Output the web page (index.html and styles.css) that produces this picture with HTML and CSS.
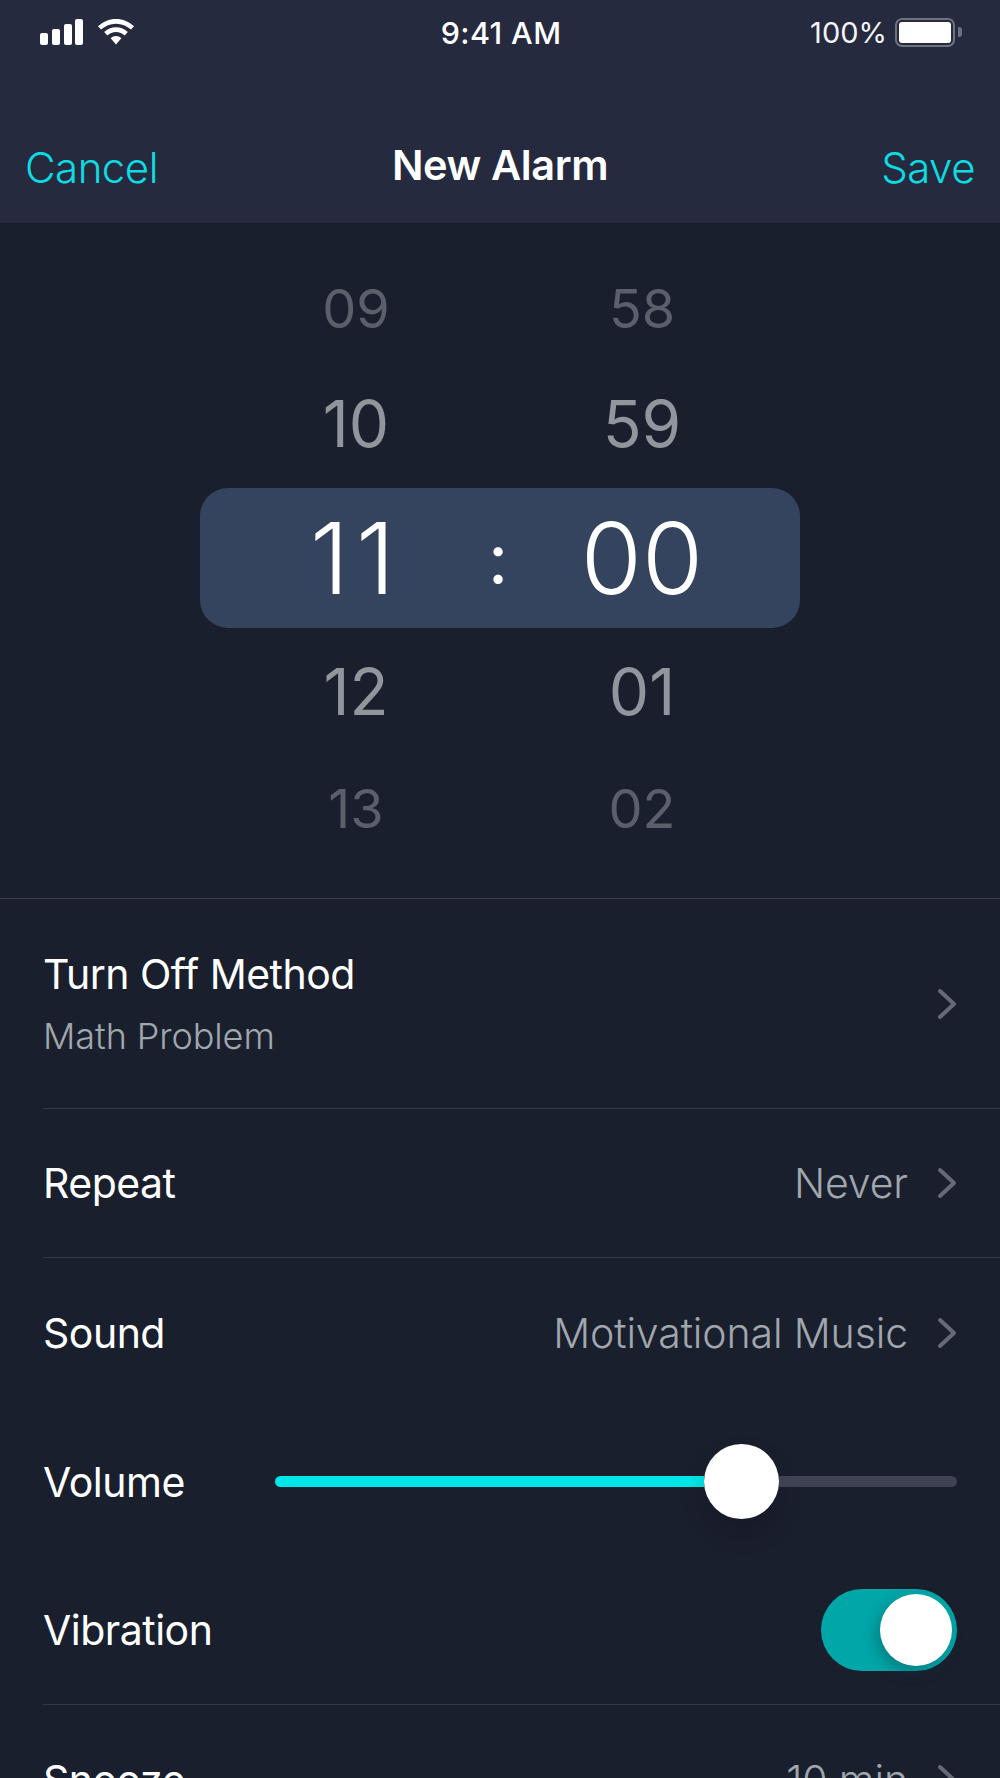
FILE: index.html
```html
<!DOCTYPE html>
<html lang="en">
<head>
<meta charset="utf-8">
<title>New Alarm</title>
<link rel="stylesheet" href="styles.css">
</head>
<body>
<div class="screen">
  <header class="top">
    <div class="status">
      <div class="status-left">
        <svg class="signal" viewBox="0 0 43 26" width="43" height="26"><rect x="0" y="14" width="8" height="12" rx="2"/><rect x="12" y="10" width="8" height="16" rx="2"/><rect x="24" y="5" width="8" height="21" rx="2"/><rect x="35" y="0" width="8" height="26" rx="2"/></svg>
        <svg class="wifi" viewBox="0 0 36 26" width="36" height="26"><path d="M18 0C11 0 5 2.700 0 7.300L3 10.600C7 7 12.300 4.800 18 4.800S29 7 33 10.600L36 7.300C31 2.700 25 0 18 0Z"/><path d="M18 8.300C13.400 8.300 9.300 10 6.200 13L9.400 16.400C11.700 14.300 14.700 13 18 13S24.300 14.300 26.600 16.400L29.800 13C26.700 10 22.600 8.300 18 8.300Z"/><path d="M18 17C16 17 14.100 17.800 12.700 19.200L18 25.500L23.300 19.200C21.900 17.800 20 17 18 17Z"/></svg>
      </div>
      <div class="clock">9:41 AM</div>
      <div class="status-right">
        <span class="pct">100%</span>
        <span class="battery"><span class="battery-fill"></span></span>
        <span class="battery-nub"></span>
      </div>
    </div>
    <nav class="nav">
      <span class="nav-btn">Cancel</span>
      <span class="nav-title">New Alarm</span>
      <span class="nav-btn nav-end">Save</span>
    </nav>
  </header>

  <section class="picker">
    <div class="pick-row far"><span class="pick-h">09</span><span></span><span class="pick-m">58</span></div>
    <div class="pick-row near"><span class="pick-h">10</span><span></span><span class="pick-m">59</span></div>
    <div class="pick-row selected"><span class="pick-h">11</span><span class="pick-c">:</span><span class="pick-m">00</span></div>
    <div class="pick-row near"><span class="pick-h">12</span><span></span><span class="pick-m">01</span></div>
    <div class="pick-row far"><span class="pick-h">13</span><span></span><span class="pick-m">02</span></div>
  </section>

  <section class="settings">
    <div class="row row-tall">
      <div class="row-text">
        <div class="label">Turn Off Method</div>
        <div class="sub">Math Problem</div>
      </div>
      <svg class="chev" viewBox="0 0 20 32" width="20" height="32"><path d="M3 3L17 16L3 29"/></svg>
    </div>
    <div class="row">
      <div class="label">Repeat</div>
      <div class="value">Never</div>
      <svg class="chev" viewBox="0 0 20 32" width="20" height="32"><path d="M3 3L17 16L3 29"/></svg>
    </div>
    <div class="row no-line">
      <div class="label">Sound</div>
      <div class="value">Motivational Music</div>
      <svg class="chev" viewBox="0 0 20 32" width="20" height="32"><path d="M3 3L17 16L3 29"/></svg>
    </div>
    <div class="row no-line">
      <div class="label label-vol">Volume</div>
      <div class="slider">
        <div class="slider-fill"></div>
        <div class="slider-knob"></div>
        <div class="slider-rest"></div>
      </div>
    </div>
    <div class="row row-vib">
      <div class="label">Vibration</div>
      <div class="toggle"><span class="toggle-knob"></span></div>
    </div>
    <div class="row no-line">
      <div class="label">Snooze</div>
      <div class="value">10 min</div>
      <svg class="chev" viewBox="0 0 20 32" width="20" height="32"><path d="M3 3L17 16L3 29"/></svg>
    </div>
  </section>
</div>
</body>
</html>
```

FILE: styles.css
```css
* { box-sizing: border-box; }
html, body { margin: 0; padding: 0; background: #1a1f2e; }
body { height: 1778px; overflow: hidden; font-family: Inter, "Liberation Sans", sans-serif; color: #fff; }
.screen { width: 1000px; height: 1778px; overflow: hidden; }

.top { height: 224px; background: #252a3f; border-bottom: 1px solid #171b29; }
.status { height: 64px; display: flex; align-items: center; justify-content: space-between; padding: 0 38px 0 40px; }
.status-left { display: flex; align-items: flex-end; gap: 15px; width: 200px; }
.signal, .wifi { fill: #fff; display: block; }
.clock { font-size: 30.500px; font-weight: 500; letter-spacing: 0.4px; }
.status-right { width: 200px; display: flex; align-items: center; justify-content: flex-end; }
.pct { font-size: 29px; font-weight: 400; margin-right: 8px; color: #f4f4f6; white-space: nowrap; }
.battery { width: 60px; height: 29px; border: 2.500px solid #6e7180; border-radius: 7px; padding: 2px; display: block; flex: none; }
.battery-fill { display: block; height: 100%; background: #fff; border-radius: 3px; }
.battery-nub { width: 4px; height: 10px; background: #6e7180; border-radius: 0 3px 3px 0; margin-left: 3px; flex: none; }

.nav { display: grid; grid-template-columns: 1fr auto 1fr; align-items: center; padding: 0 25px; height: 64px; margin-top: 71px; }
.nav-btn { font-size: 42px; color: #0ddce2; font-weight: 300; letter-spacing: -0.5px; }
.nav-end { text-align: right; }
.nav-title { font-size: 41.500px; font-weight: 600; letter-spacing: -0.4px; margin-top: -5px; }

.picker { height: 675px; padding-top: 26px; border-bottom: 1px solid #3a3e4c; }
.pick-row { display: grid; grid-template-columns: 200px 84px 204px; height: 116px; align-items: center; text-align: center; padding-left: 256px; font-weight: 400; }
.far { font-size: 54px; color: #5a5f6a; }
.near { font-size: 64px; color: #91959c; line-height: 112px; }
.selected { height: 140px; margin: 6px 200px; padding-left: 56px; background: #34445e; border-radius: 28px; font-size: 99px; font-weight: 300; color: #fff; }
.selected .pick-h { letter-spacing: 7px; }
.pick-c { font-size: 70px; font-weight: 400; }

.settings { padding-left: 43px; }
.row { height: 149px; display: flex; align-items: center; padding-right: 43px; border-bottom: 1px solid #33374a; }
.row.no-line { border-bottom: 0; }
.row-tall { height: 210px; }
.row-text { flex: 1; }
.label { font-size: 41px; font-weight: 400; color: #fff; letter-spacing: -0.5px; flex: 1; }
.sub { font-size: 36px; font-weight: 300; color: #a0a7ad; letter-spacing: -0.1px; margin-top: 15px; }
.value { font-size: 41px; font-weight: 300; color: #a0a7ad; letter-spacing: -0.1px; margin-right: 29px; }
.chev { fill: none; stroke: #666a75; stroke-width: 4; stroke-linecap: round; stroke-linejoin: round; display: block; }

.label-vol { flex: none; width: 232px; }
.slider { flex: 1; display: flex; align-items: center; }
.slider-fill { width: 429px; height: 11px; background: #00e6e8; border-radius: 6px 0 0 6px; }
.slider-knob { width: 75px; height: 75px; border-radius: 50%; background: #fff; flex: none; box-shadow: 0 14px 24px rgba(8,10,18,.2); }
.slider-rest { flex: 1; height: 11px; background: #3f4252; border-radius: 0 6px 6px 0; }

.toggle { width: 136px; height: 82px; border-radius: 41px; background: #00a6a8; padding: 5px; display: flex; justify-content: flex-end; }
.toggle-knob { width: 72px; height: 72px; border-radius: 50%; background: #fff; box-shadow: -4px 6px 14px rgba(0,60,70,.35); }
```
